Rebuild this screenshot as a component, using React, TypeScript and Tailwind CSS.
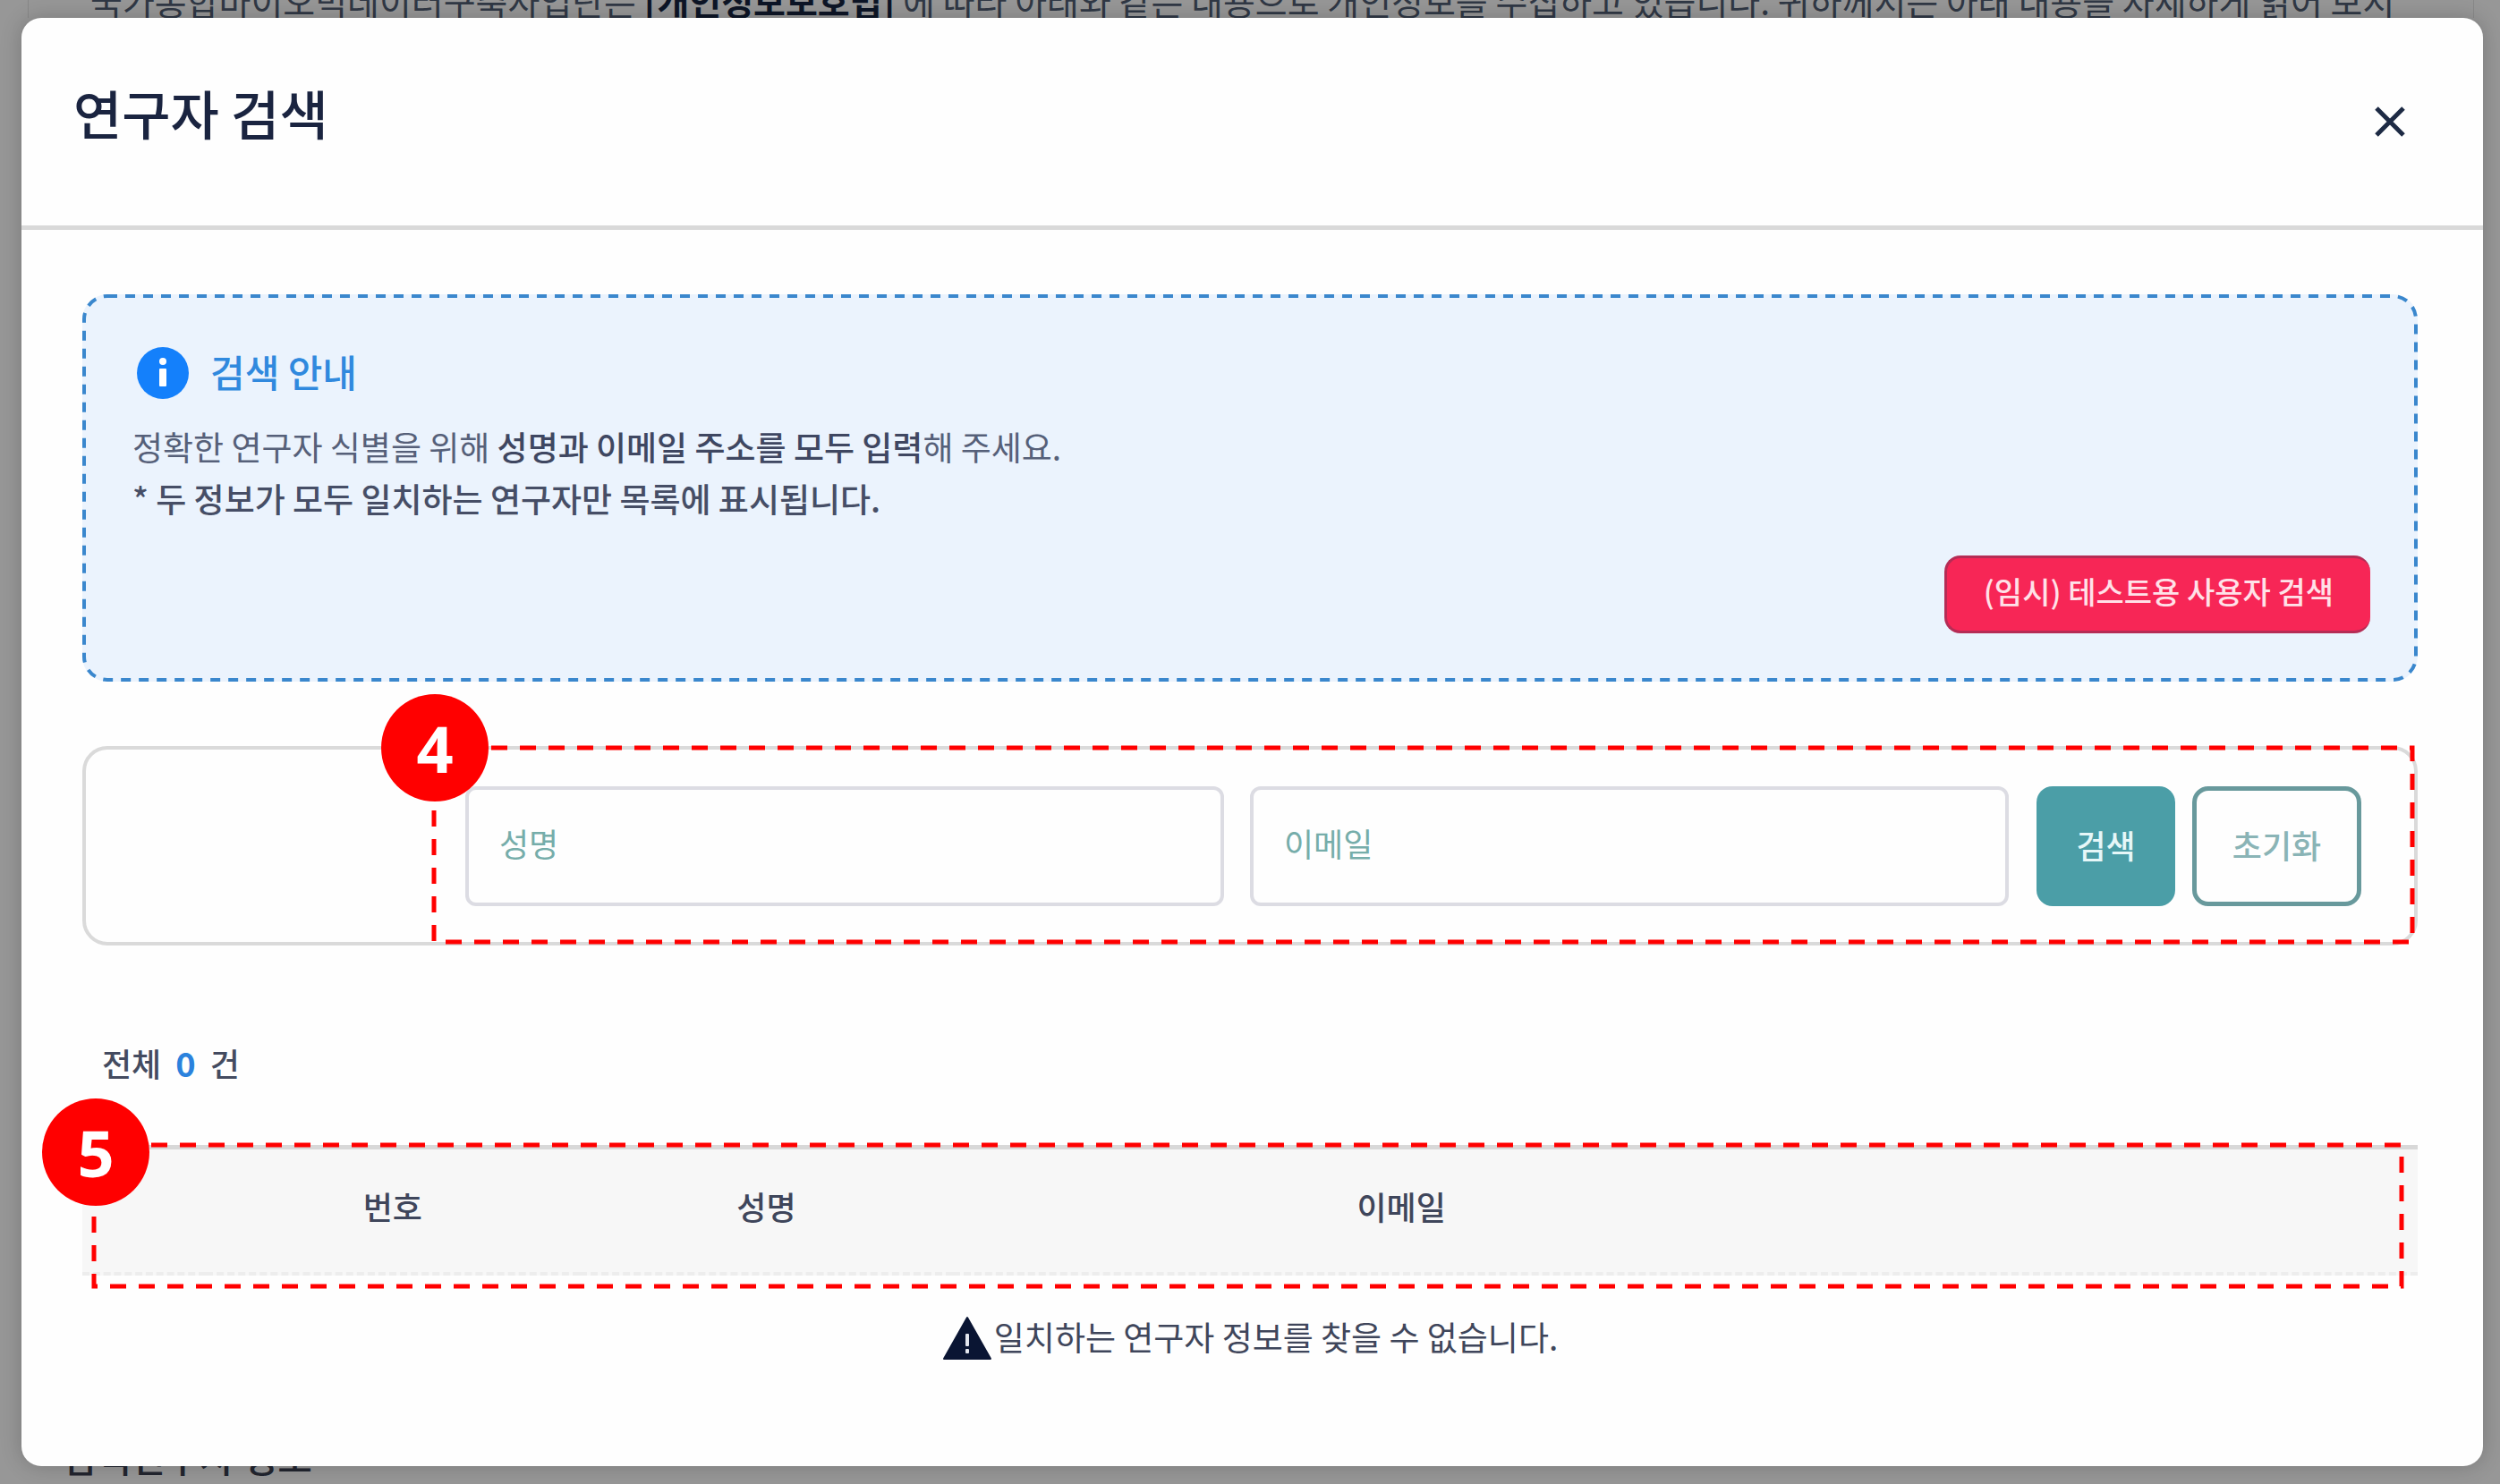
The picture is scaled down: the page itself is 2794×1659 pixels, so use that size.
import type { ReactNode } from "react";

function DashedFrame({ className, children }: { className: string; children: ReactNode }) {
  return (
    <div className={`pointer-events-none absolute ${className}`}>
      <svg className="block h-full w-full overflow-visible" fill="none" aria-hidden="true">
        {children}
      </svg>
    </div>
  );
}

function Badge({ label, className }: { label: string; className: string }) {
  return (
    <div
      className={`absolute flex h-[120px] w-[120px] items-center justify-center rounded-full bg-[#ff0000] font-['Noto_Sans',sans-serif] text-[72px] leading-none font-bold text-white ${className}`}
    >
      {label}
    </div>
  );
}

function InfoIcon() {
  return (
    <svg className="h-[58px] w-[58px]" viewBox="0 0 58 58" aria-hidden="true">
      <circle cx="29" cy="29" r="29" fill="#1480fb" />
      <circle cx="29" cy="16" r="4" fill="#fff" />
      <rect x="25" y="24" width="8" height="20" rx="1" fill="#fff" />
    </svg>
  );
}

function WarningIcon() {
  return (
    <svg className="h-[50px] w-[56px]" viewBox="0 0 56 50" aria-hidden="true">
      <path d="M28 2 L54 48 H2 Z" fill="#0a1533" stroke="#0a1533" strokeWidth="2" strokeLinejoin="round" />
      <rect x="26" y="20" width="4" height="14" rx="1" fill="#e3e6ee" />
      <rect x="26" y="37" width="4" height="5" rx="1" fill="#e3e6ee" />
    </svg>
  );
}

function Backdrop() {
  return (
    <div className="absolute inset-0 flex flex-col justify-between overflow-hidden whitespace-nowrap" aria-hidden="true">
      <div className="mr-[29px] ml-[31px] border-x border-[#888888] pl-[69px]">
        <p className="-mt-5 text-[39px] leading-10 text-[#303845]">
          국가통합바이오빅데이터구축사업단은 <b className="text-[#0d1526]">[개인정보보호법]</b> 에 따라 아래와 같은 내용으로
          개인정보를 수집하고 있습니다. 귀하께서는 아래 내용을 자세하게 읽어 보시
        </p>
      </div>
      <p className="pb-[11px] pl-[69px] text-[42px] leading-10 font-medium text-[#22252f]">검색연구자 정보</p>
    </div>
  );
}

export default function App() {
  return (
    <div className="relative flex min-h-screen bg-[#979797] pt-5 pr-[19px] pb-5 pl-6 font-['Noto_Sans_CJK_KR',sans-serif]">
      <Backdrop />
      <div
        role="dialog"
        aria-labelledby="dialog-title"
        className="relative flex flex-1 flex-col rounded-[22px] bg-[#fefefe] shadow-[0_0_24px_rgba(0,0,0,0.2)]"
      >
        <header className="flex items-center justify-between border-b-[5px] border-[#d9d9d9] pt-[76px] pr-[80px] pb-[76px] pl-[58px]">
          <h1 id="dialog-title" className="pb-5 text-[59px] leading-[60px] font-medium text-[#1a2440]">
            연구자 검색
          </h1>
          <button type="button" aria-label="닫기" className="flex h-12 w-12 items-center justify-center">
            <svg className="h-[34px] w-[34px]" viewBox="0 0 34 34" aria-hidden="true">
              <path d="M2 2 L32 32 M32 2 L2 32" stroke="#1d2a44" strokeWidth="5" />
            </svg>
          </button>
        </header>

        <main className="flex flex-col pt-[72px] pr-[73px] pl-[68px]">
          <section className="relative flex flex-col rounded-[28px] bg-[#ebf3fd] pt-[59px] pr-[53px] pb-[54px] pl-[56px]">
            <DashedFrame className="inset-[2px]">
              <rect width="100%" height="100%" rx="26" stroke="#3a87cd" strokeWidth="4" strokeDasharray="11 9" />
            </DashedFrame>
            <div className="flex items-center gap-6 pl-[5px]">
              <InfoIcon />
              <h2 className="pb-1 text-[42px] leading-[54px] font-medium text-[#3089de]">검색 안내</h2>
            </div>
            <p className="mt-6 text-[37px] leading-[58px] text-[#566079]">
              정확한 연구자 식별을 위해 <strong className="font-medium text-[#3f4761]">성명과 이메일 주소를 모두 입력</strong>해 주세요.
            </p>
            <p className="text-[37px] leading-[58px] font-medium text-[#464e66]">
              * 두 정보가 모두 일치하는 연구자만 목록에 표시됩니다.
            </p>
            <button
              type="button"
              className="mt-[35px] h-[87px] self-end rounded-[18px] border-[3px] border-r-0 border-[#b52c55] bg-[#f72656] px-[41px] pb-2 text-[34px] leading-[50px] font-medium text-[#ffe1e8]"
            >
              (임시) 테스트용 사용자 검색
            </button>
          </section>

          <div className="relative mt-[72px]">
            <form
              className="flex rounded-[28px] border-4 border-[#dadada] pt-[41px] pr-[59px] pb-10 pl-[424px]"
              onSubmit={(e) => e.preventDefault()}
            >
              <input
                type="text"
                aria-label="성명"
                placeholder="성명"
                className="h-[134px] min-w-0 flex-1 rounded-[12px] border-4 border-[#dcdce3] bg-[#fefefe] px-[34px] pb-2 text-[36px] font-normal text-[#3f4761] placeholder:text-[#76adaa]"
              />
              <input
                type="email"
                aria-label="이메일"
                placeholder="이메일"
                className="ml-[29px] h-[134px] min-w-0 flex-1 rounded-[12px] border-4 border-[#dcdce3] bg-[#fefefe] px-[34px] pb-2 text-[36px] font-normal text-[#3f4761] placeholder:text-[#76adaa]"
              />
              <button type="submit" className="ml-[31px] h-[134px] w-[155px] rounded-[18px] bg-[#4b9ea7] pb-1 text-[36px] font-medium text-[#e6f7f8]">
                검색
              </button>
              <button type="reset" className="ml-[19px] h-[134px] w-[189px] rounded-[18px] border-[5px] border-[#68999c] bg-[#fefefe] pb-1 text-[36px] font-medium text-[#8ab4b6]">
                초기화
              </button>
            </form>
            <DashedFrame className="top-[2px] right-[6px] bottom-[4px] left-[393px]">
              <rect width="100%" height="100%" stroke="#ff0000" strokeWidth="5" strokeDasharray="18 14" />
            </DashedFrame>
            <Badge label="4" className="-top-[58px] left-[334px]" />
          </div>

          <p className="mt-[102px] flex items-center gap-4 pl-[22px] text-[36px] leading-[58px] font-medium text-[#444b60]">
            <span>전체</span>
            <span className="text-[38px] font-bold text-[#2b82dd]">0</span>
            <span>건</span>
          </p>

          <div className="relative mt-[63px]">
            <table className="w-full table-fixed border-separate border-spacing-0 text-[36px] leading-[58px] text-[#3f465b]">
              <colgroup>
                <col className="w-[138px]" />
                <col className="w-[16%]" />
                <col className="w-[16%]" />
                <col className="w-[1002px]" />
                <col />
              </colgroup>
              <thead>
                <tr className="bg-[#f7f7f7]">
                  {["", "번호", "성명", "이메일", ""].map((label, i) => (
                    <th
                      key={i}
                      scope="col"
                      className="h-[146px] border-t-[5px] border-b-[4px] border-t-[#d8d8d8] border-b-[#ededed] pb-3 font-medium [border-bottom-style:dashed]"
                    >
                      {label}
                    </th>
                  ))}
                </tr>
              </thead>
              <tbody>
                <tr>
                  <td colSpan={5} className="h-[140px]">
                    <div className="flex items-center justify-center gap-[2px]">
                      <WarningIcon />
                      <span className="pb-1 text-[37px] leading-[58px]">일치하는 연구자 정보를 찾을 수 없습니다.</span>
                    </div>
                  </td>
                </tr>
              </tbody>
            </table>
            <DashedFrame className="top-0 right-[18px] left-[13px] h-[158px]">
              <rect width="100%" height="100%" stroke="#ff0000" strokeWidth="5" strokeDasharray="18 14" />
            </DashedFrame>
            <Badge label="5" className="-top-[52px] -left-[45px]" />
          </div>
        </main>
      </div>
    </div>
  );
}
